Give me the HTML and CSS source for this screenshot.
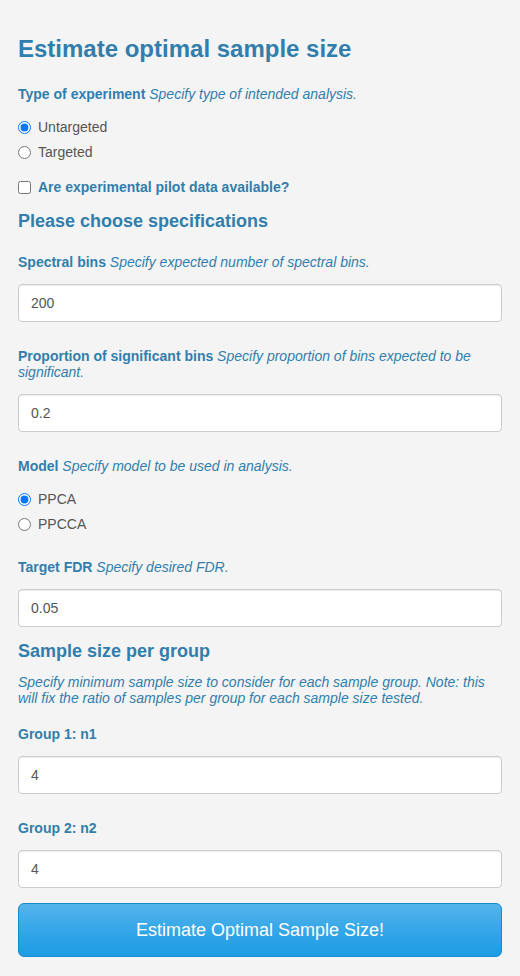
FILE: index.html
```html
<!DOCTYPE html>
<html>
<head>
<meta charset="utf-8">
<link rel="stylesheet" href="styles.css">
</head>
<body>
<div class="panel">
  <h1 class="title">Estimate optimal sample size</h1>

  <div class="group">
    <span class="label">Type of experiment <span class="help">Specify type of intended analysis.</span></span>
    <div class="options">
      <label class="option"><input type="radio" name="exp" checked><span>Untargeted</span></label>
      <label class="option"><input type="radio" name="exp"><span>Targeted</span></label>
    </div>
  </div>

  <label class="check"><input type="checkbox"><span>Are experimental pilot data available?</span></label>

  <h2 class="subtitle first">Please choose specifications</h2>

  <div class="field first-field">
    <span class="label">Spectral bins <span class="help">Specify expected number of spectral bins.</span></span>
    <input class="text-input" type="text" value="200">
  </div>

  <div class="field">
    <span class="label">Proportion of significant bins <span class="help">Specify proportion of bins expected to be significant.</span></span>
    <input class="text-input" type="text" value="0.2">
  </div>

  <div class="field">
    <span class="label">Model <span class="help">Specify model to be used in analysis.</span></span>
    <div class="options model-options">
      <label class="option"><input type="radio" name="model" checked><span>PPCA</span></label>
      <label class="option"><input type="radio" name="model"><span>PPCCA</span></label>
    </div>
  </div>

  <div class="field fdr">
    <span class="label">Target FDR <span class="help">Specify desired FDR.</span></span>
    <input class="text-input" type="text" value="0.05">
  </div>

  <h2 class="subtitle second">Sample size per group</h2>
  <p class="help-block">Specify minimum sample size to consider for each sample group. Note: this will fix the ratio of samples per group for each sample size tested.</p>

  <div class="field group1">
    <span class="label">Group 1: n1</span>
    <input class="text-input" type="text" value="4">
  </div>

  <div class="field">
    <span class="label">Group 2: n2</span>
    <input class="text-input" type="text" value="4">
  </div>

  <button class="submit" type="button">Estimate Optimal Sample Size!</button>
</div>
</body>
</html>
```

FILE: styles.css
```css
html, body {
  margin: 0;
  padding: 0;
  background: #f4f4f4;
}

body {
  font-family: "Liberation Sans", Arial, sans-serif;
  font-size: 14px;
  color: #555555;
}

.panel {
  padding: 36px 18px 19px 18px;
}

.title {
  margin: 0;
  font-size: 24px;
  line-height: 26.4px;
  font-weight: bold;
  color: #317eac;
}

.label {
  display: block;
  font-size: 14px;
  line-height: 16px;
  font-weight: bold;
  color: #317eac;
}

.help {
  font-weight: normal;
  font-style: italic;
}

.group {
  margin-top: 23.5px;
}

.options {
  display: flex;
  flex-direction: column;
  gap: 5px;
  margin-top: 15.5px;
}

.option {
  display: flex;
  align-items: center;
  gap: 7px;
  height: 20px;
  line-height: 20px;
  color: #555555;
}

.option input,
.check input {
  margin: 0;
  width: 13px;
  height: 13px;
  flex: none;
}

.check {
  display: flex;
  align-items: center;
  gap: 7px;
  height: 20px;
  line-height: 20px;
  margin-top: 15px;
  font-weight: bold;
  color: #317eac;
}

.subtitle {
  margin: 0;
  font-size: 18px;
  line-height: 19.8px;
  font-weight: bold;
  color: #317eac;
}

.subtitle.first {
  margin-top: 14.5px;
}

.subtitle.second {
  margin-top: 15px;
}

.field {
  margin-top: 26px;
}

.field.first-field {
  margin-top: 22px;
}

.field.fdr {
  margin-top: 24.5px;
}

.field.group1 {
  margin-top: 20.5px;
}

.text-input {
  display: block;
  box-sizing: border-box;
  width: 100%;
  height: 38px;
  margin: 14px 0 0 0;
  padding: 0 12px;
  border: 1px solid #cccccc;
  border-radius: 4px;
  background: #ffffff;
  font-family: "Liberation Sans", Arial, sans-serif;
  font-size: 14px;
  color: #555555;
  box-shadow: inset 0 1px 1px rgba(0, 0, 0, 0.075);
  outline: none;
}

.help-block {
  margin: 12px 0 0 0;
  font-size: 14px;
  line-height: 16px;
  font-style: italic;
  color: #317eac;
}

.submit {
  display: block;
  box-sizing: border-box;
  width: 100%;
  height: 54px;
  margin-top: 15px;
  border: 1px solid #178acc;
  border-radius: 6px;
  background-image: linear-gradient(#54b4eb, #2fa4e7 60%, #1d9ce5);
  color: #ffffff;
  font-family: "Liberation Sans", Arial, sans-serif;
  font-size: 18px;
  cursor: pointer;
}
```
